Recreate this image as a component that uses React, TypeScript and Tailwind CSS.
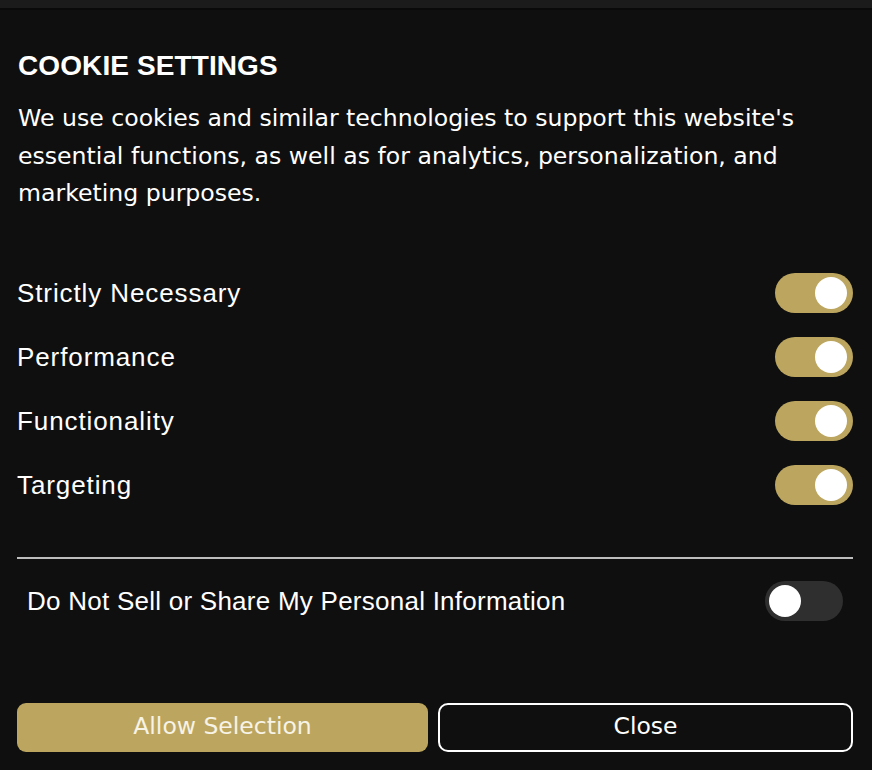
import React from "react";

const gold = "bg-[#bca65f]";

function Toggle({ on }: { on: boolean }) {
  return (
    <div
      className={`flex h-[40px] w-[78px] shrink-0 items-center rounded-full ${
        on ? `${gold} justify-end pr-[6px]` : "bg-[#2f2f2f] justify-start pl-[4px]"
      }`}
    >
      <div className="h-[32px] w-[32px] rounded-full bg-white" />
    </div>
  );
}

const rows = ["Strictly Necessary", "Performance", "Functionality", "Targeting"];

export default function App() {
  return (
    <div className="min-h-[770px] w-full bg-[#0f0f0f] text-white">
      <div className="h-[8px] bg-[#1b1b1b]" />
      <div className="h-[2px] bg-[#0a0a0a]" />
      <div className="pl-[17px] pr-[19px]">
        <h1 className="mt-[39px] pl-[1px] font-['Liberation_Sans',Arial,sans-serif] text-[28px] font-bold leading-[34px] tracking-[0.1px]">
          COOKIE SETTINGS
        </h1>
        <p className="mt-[17px] pl-[1px] font-['DejaVu_Sans',sans-serif] text-[23.6px] leading-[37.5px] text-white">
          We use cookies and similar technologies to support this website's essential functions, as well as for analytics, personalization, and marketing purposes.
        </p>
        <div className="mt-[60px] flex flex-col gap-[24px]">
          {rows.map((r) => (
            <div key={r} className="flex items-center justify-between">
              <span className="font-['Liberation_Sans',Arial,sans-serif] text-[26px] leading-[40px] tracking-[0.9px]">
                {r}
              </span>
              <Toggle on />
            </div>
          ))}
        </div>
        <div className="mt-[52px] h-[2px] bg-[#bdbdbd]" />
        <div className="mt-[22px] flex items-center justify-between px-[10px]">
          <span className="font-['Liberation_Sans',Arial,sans-serif] text-[26px] leading-[40px] tracking-[0.25px]">
            Do Not Sell or Share My Personal Information
          </span>
          <Toggle on={false} />
        </div>
        <div className="mt-[82px] flex gap-[10px]">
          <button className={`flex h-[49px] flex-1 items-center justify-center rounded-[9px] ${gold} font-['DejaVu_Sans',sans-serif] text-[23.5px] text-[#f7f3e6]`}>
            Allow Selection
          </button>
          <button className="flex h-[49px] flex-1 items-center justify-center rounded-[10px] border-2 border-white font-['DejaVu_Sans',sans-serif] text-[23.5px] text-white">
            Close
          </button>
        </div>
      </div>
    </div>
  );
}
